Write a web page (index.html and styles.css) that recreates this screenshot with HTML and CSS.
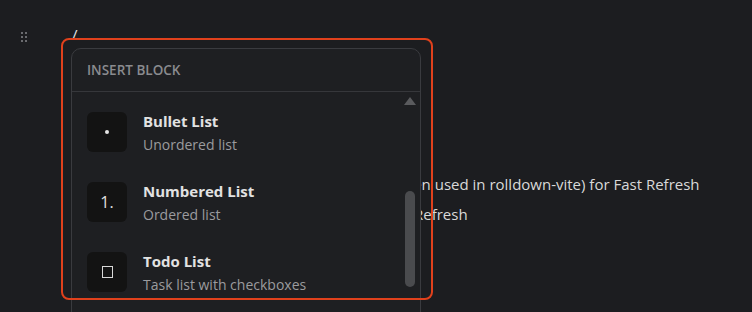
FILE: index.html
```html
<!DOCTYPE html>
<html lang="en">
<head>
    <meta charset="UTF-8">
    <meta name="viewport" content="width=device-width, initial-scale=1.0">
    <title>Editor - Insert Block</title>
    <link rel="stylesheet" href="styles.css">
</head>
<body>
    <div class="editor">
        <div class="block">
            <div class="handle">
                <span></span><span></span>
                <span></span><span></span>
                <span></span><span></span>
            </div>
            <div class="block-text">/</div>
        </div>

        <div class="doc">
            <p class="line">@vitejs/plugin-react uses Babel (or oxc) when used in rolldown-vite) for Fast Refresh</p>
            <p class="line">@vitejs/plugin-react-swc uses SWC for Fast Refresh</p>
        </div>

        <div class="menu">
            <div class="menu-header">Insert block</div>
            <div class="menu-list">
                <div class="menu-item">
                    <div class="item-icon"><span class="dot"></span></div>
                    <div class="item-text">
                        <div class="item-title">Bullet List</div>
                        <div class="item-desc">Unordered list</div>
                    </div>
                </div>
                <div class="menu-item">
                    <div class="item-icon">1.</div>
                    <div class="item-text">
                        <div class="item-title">Numbered List</div>
                        <div class="item-desc">Ordered list</div>
                    </div>
                </div>
                <div class="menu-item">
                    <div class="item-icon"><span class="box"></span></div>
                    <div class="item-text">
                        <div class="item-title">Todo List</div>
                        <div class="item-desc">Task list with checkboxes</div>
                    </div>
                </div>
                <div class="scrollbar">
                    <div class="scroll-up"></div>
                    <div class="scroll-thumb"></div>
                </div>
            </div>
        </div>

        <div class="highlight"></div>
    </div>
</body>
</html>
```

FILE: styles.css
```css
html, body {
    margin: 0;
    height: 100%;
    overflow: hidden;
}

body {
    background-color: #1c1d20;
    color: #d6d6d6;
    font-family: "Open Sans", "Noto Sans", sans-serif;
}

.editor {
    position: relative;
    height: 312px;
    overflow: hidden;
}

.block {
    display: flex;
    align-items: center;
    padding: 25px 0 0 21px;
    height: 24px;
}

.handle {
    display: grid;
    grid-template-columns: 2px 2px;
    gap: 2px 2px;
    width: 6px;
}

.handle span {
    width: 2px;
    height: 2px;
    background-color: #6a6b6f;
}

.block-text {
    margin-left: 45px;
    font-size: 15px;
    color: #e4e4e4;
    line-height: 20px;
    margin-top: -6px;
}

.doc {
    padding: 120px 0 0 72px;
}

.line {
    margin: 0;
    font-size: 15px;
    line-height: 30px;
    white-space: nowrap;
    color: #d9d9d9;
}

.line:first-child {
    text-indent: 43px;
}

.line + .line {
    text-indent: 41px;
}

.menu {
    position: absolute;
    left: 71px;
    top: 48px;
    width: 350px;
    height: 290px;
    box-sizing: border-box;
    background-color: #1e1f22;
    border: 1px solid #3a3b3f;
    border-radius: 10px;
    overflow: hidden;
}

.menu-header {
    height: 42px;
    display: flex;
    align-items: center;
    padding-left: 15px;
    border-bottom: 1px solid #36373b;
    font-size: 13.5px;
    font-weight: 600;
    text-transform: uppercase;
    color: #8a8b8f;
}

.menu-list {
    position: relative;
    padding-top: 5px;
}

.menu-item {
    display: flex;
    align-items: center;
    gap: 16px;
    padding: 12px 15px;
}

.item-icon {
    width: 40px;
    height: 40px;
    flex-shrink: 0;
    display: flex;
    align-items: center;
    justify-content: center;
    background-color: #131313;
    border-radius: 6px;
    font-size: 16px;
    color: #e0e0e0;
}

.dot {
    width: 4px;
    height: 4px;
    border-radius: 50%;
    background-color: #e6e6e6;
}

.box {
    width: 11px;
    height: 12px;
    border: 1.5px solid #d8d8d8;
    box-sizing: border-box;
}

.item-title {
    font-size: 15px;
    font-weight: 700;
    line-height: 24px;
    color: #e2e2e2;
}

.item-desc {
    margin-top: 2px;
    font-size: 14px;
    line-height: 20px;
    color: #9b9b9e;
}

.scrollbar {
    position: absolute;
    top: 5px;
    right: 4px;
    width: 12px;
    height: 240px;
}

.scroll-up {
    width: 0;
    height: 0;
    margin: 0 auto;
    border-left: 6px solid transparent;
    border-right: 6px solid transparent;
    border-bottom: 8px solid #5a5b5e;
}

.scroll-thumb {
    width: 10px;
    height: 96px;
    margin: 86px auto 0;
    border-radius: 5px;
    background-color: #4a4b4e;
}

.highlight {
    position: absolute;
    left: 61px;
    top: 38px;
    width: 372px;
    height: 262px;
    box-sizing: border-box;
    border: 2px solid #e0411c;
    border-radius: 8px;
}
```
